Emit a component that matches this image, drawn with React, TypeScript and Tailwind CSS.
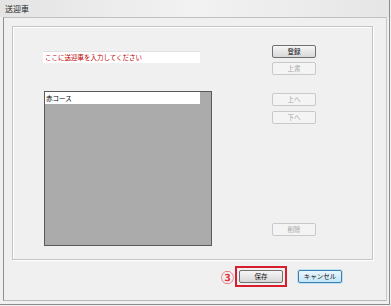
import type { ReactNode } from "react";

const FONT = { fontFamily: '"Noto Sans CJK JP", "Noto Sans", sans-serif' };

// Classic WinForms button: enabled, disabled or focused (blue glow).
function Btn({ label, kind = "off", className = "" }: { label: string; kind?: "on" | "off" | "focus"; className?: string }) {
  const look =
    kind === "on"
      ? "border-[#707070] bg-gradient-to-b from-[#f6f6f6] to-[#d8d8d8] text-[#111]"
      : kind === "focus"
        ? "border-[#3c7fb1] bg-gradient-to-b from-[#eaf6fd] to-[#c4e5f6] text-[#111] shadow-[0_0_0_1px_#bfe0f3]"
        : "border-[#c9c9c9] bg-[#f4f4f4] text-[#a6a6a6]";
  return (
    <div
      className={`flex h-[13px] w-[44px] items-center justify-center rounded-[2px] border text-[6.5px] leading-none ${look} ${className}`}
    >
      {label}
    </div>
  );
}

function GroupBox({ children }: { children: ReactNode }) {
  return (
    <div className="ml-[8px] mt-[8px] h-[234px] w-[361px] border border-[#c4c4c4] shadow-[inset_1px_1px_0_#fff,1px_1px_0_#fff]">
      {children}
    </div>
  );
}

export default function App() {
  return (
    <div className="h-[306px] w-[391px] overflow-hidden bg-[#f0f0f0]" style={FONT}>
      <div className="flex h-[305px] w-[390px] flex-col border-b border-r border-[#8c8c8c]">
        {/* title bar */}
        <div className="flex h-[17px] shrink-0 items-center bg-gradient-to-r from-[#e4e4e4] via-[#f2f2f2] to-[#e6e6e6] pl-[5px] text-[8px] text-[#222]">
          送迎車
        </div>

        {/* client area */}
        <div className="ml-[3px] h-[284px] w-[384px] border border-l-[#8f8f8f] border-t-[#c0c0c0] border-r-[#c8c8c8] border-b-[#b8b8b8] bg-[#f0f0f0]">
          <GroupBox>
            <div className="flex">
              <div className="ml-[30px] flex w-[169px] flex-col pt-[24px]">
                <div className="flex h-[12px] w-[157px] items-center bg-white pl-[2px] text-[6.5px] leading-none text-[#c00000] shadow-[inset_0_1px_0_#e0e0e0]">
                  ここに送迎車を入力してください
                </div>
                <div className="ml-[1px] mt-[28px] h-[155px] w-[168px] border border-[#5a5a5a] bg-[#ababab]">
                  <div className="flex h-[12px] w-[155px] items-center bg-white pl-[1px] text-[6.5px] leading-none text-black">
                    赤コース
                  </div>
                </div>
              </div>
              <div className="ml-[60px] flex flex-col pt-[18px]">
                <Btn label="登録" kind="on" />
                <Btn label="上書" className="mt-[4px]" />
                <Btn label="上へ" className="mt-[18px]" />
                <Btn label="下へ" className="mt-[5px]" />
                <Btn label="削除" className="mt-[99px]" />
              </div>
            </div>
          </GroupBox>

          {/* bottom buttons */}
          <div className="ml-[217px] mt-[6px] flex items-center">
            <span className="w-[13px] text-[13px] font-bold leading-none text-[#e3303a]">③</span>
            <div className="ml-[1px] flex h-[21px] w-[52px] items-center justify-center border-2 border-[#d81e2a]">
              <Btn label="保存" kind="on" className="w-[42px]" />
            </div>
            <Btn label="キャンセル" kind="focus" className="ml-[11px]" />
          </div>
        </div>
      </div>
    </div>
  );
}
